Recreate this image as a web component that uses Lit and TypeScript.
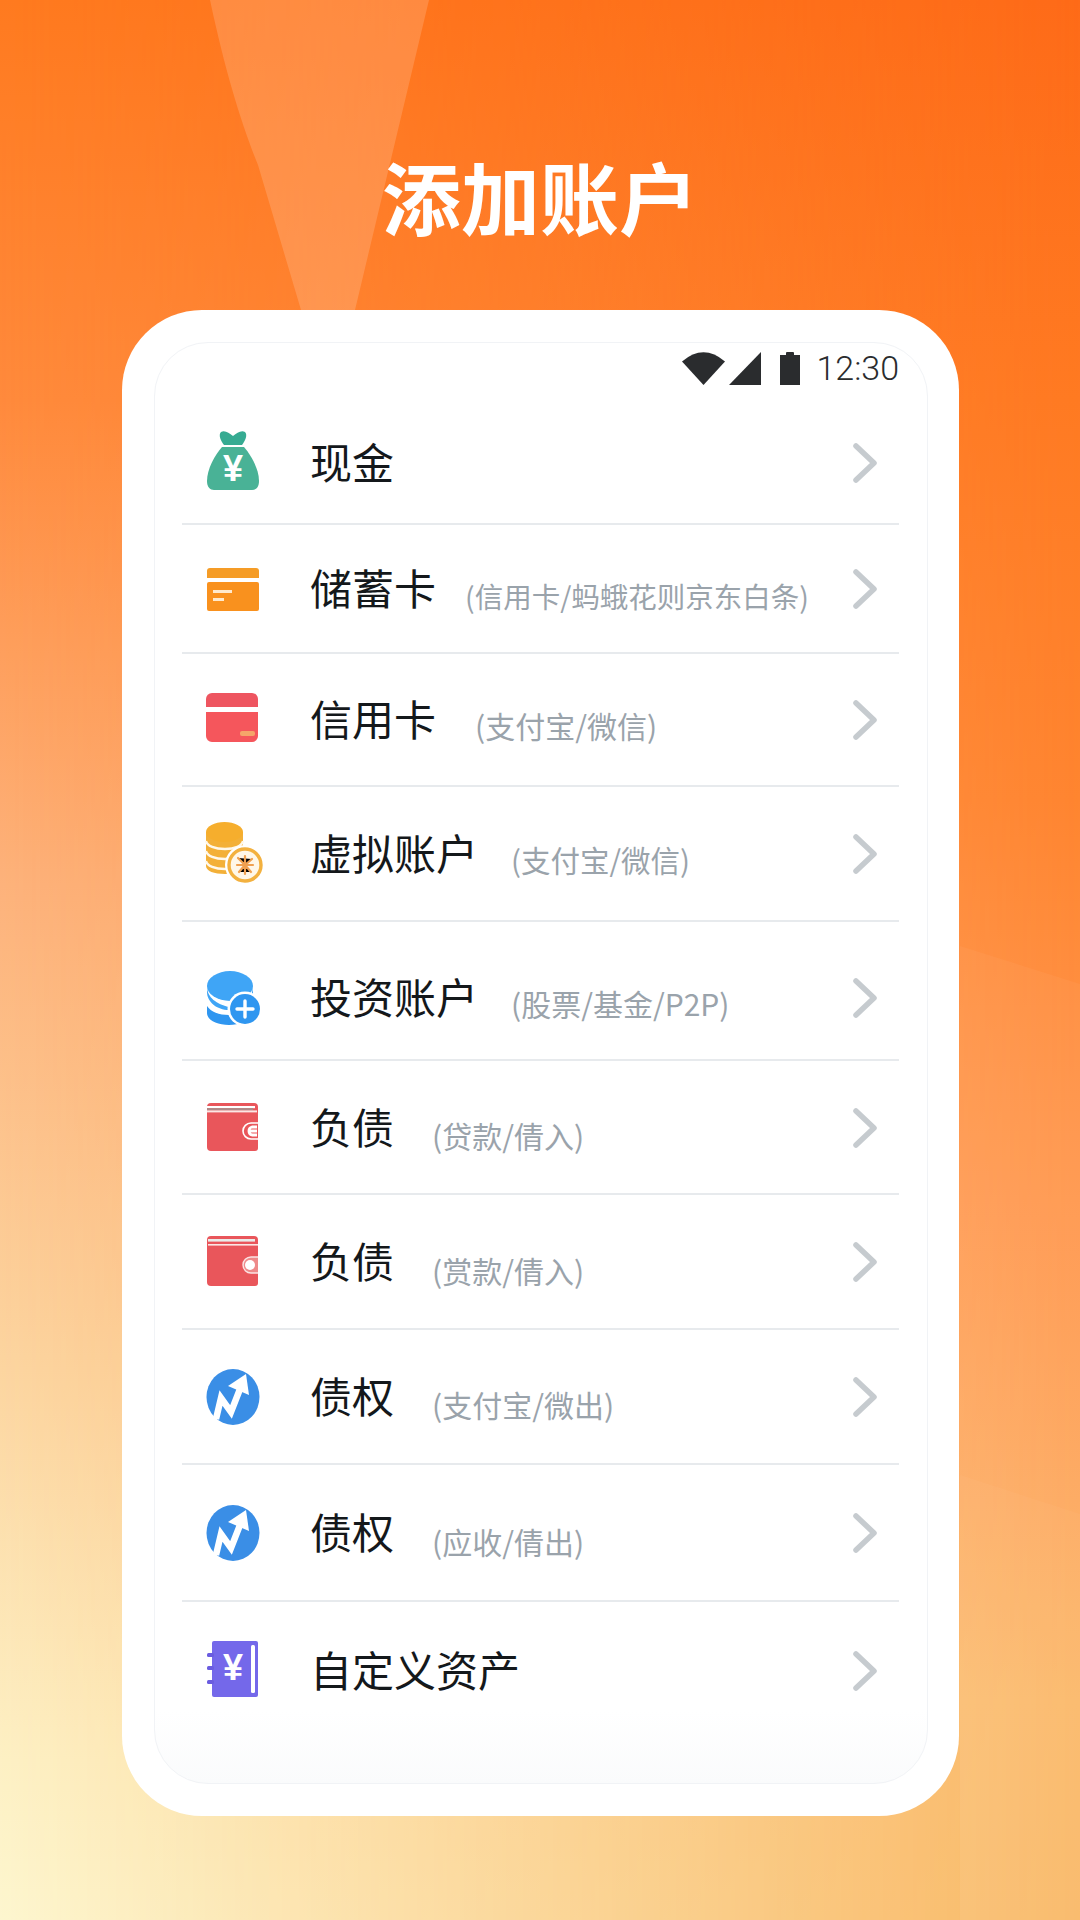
import { LitElement, html, css, svg } from "lit";
import { customElement } from "lit/decorators.js";

const yen = (x: number, y: number, size: number, fill: string) =>
  svg`<text x=${x} y=${y} font-size=${size} font-weight="700" font-family="Liberation Sans, sans-serif" text-anchor="middle" fill=${fill}>¥</text>`;

const icons: Record<string, unknown> = {
  bag: svg`
    <path d="M20 1C24-1 28 2 32 5 36 2 40-1 44 1 47 4 44 10 41 14H23C20 10 17 4 20 1Z" fill="#36AB92"/>
    <path d="M21 16H43C50 24 58 38 58 50 58 56 55 59 51 59H13C9 59 6 56 6 50 6 38 14 24 21 16Z" fill="#49B296"/>
    ${yen(32, 50, 36, "#fff")}`,
  debit: svg`
    <path d="M6 14a3 3 0 0 1 3-3H55a3 3 0 0 1 3 3V21H6Z" fill="#F59C26"/>
    <rect x="6" y="25" width="52" height="29" rx="2" fill="#F9911E"/>
    <rect x="12" y="33" width="19" height="3" fill="#FFE9CC"/>
    <rect x="12" y="41" width="11" height="3" fill="#FFE9CC"/>`,
  credit: svg`
    <path d="M5 11a6 6 0 0 1 6-6H51a6 6 0 0 1 6 6V19H5Z" fill="#EE5560"/>
    <path d="M5 24H57V48a6 6 0 0 1-6 6H11a6 6 0 0 1-6-6Z" fill="#F5565C"/>
    <rect x="39" y="43" width="15" height="5" rx="2" fill="#F5A56A"/>`,
  coins: svg`
    <path d="M5 10H42V44C42 49 34 52 24 52 13 52 5 49 5 44Z" fill="#F3B038"/>
    <g fill="none" stroke="#FFF8EA" stroke-width="2.4">
      <path d="M5 19C6 24 14 27 24 27 34 27 41 24 42 19"/>
      <path d="M5 29C6 34 14 37 24 37 34 37 41 34 42 29"/>
      <path d="M5 39C6 44 14 47 24 47 34 47 41 44 42 39"/>
    </g>
    <ellipse cx="23.5" cy="10" rx="18.5" ry="10" fill="#F6AE2D"/>
    <circle cx="44" cy="43" r="20" fill="#fff"/>
    <circle cx="44" cy="43" r="16" fill="#FFF7E8" stroke="#F3B13F" stroke-width="3.4"/>
    <g stroke="#F0A050" stroke-width="2.2" stroke-linecap="round">
      <path d="M37 36 44 43 51 37M36 43H52M44 34V52M38 50 44 43 50 50"/>
    </g>`,
  db: svg`
    <path d="M6 40V47C6 54 16 59 28 59 40 59 50 54 50 47V40C46 46 38 49 28 49 18 49 10 46 6 40Z" fill="#2F96F0"/>
    <ellipse cx="29" cy="20" rx="23" ry="15" fill="#3FA5F6"/>
    <path d="M6 20C6 32 16 38 28 41 38 43 50 36 52 22V30C50 40 38 44 28 44 16 44 6 36 6 26Z" fill="#3FA5F6"/>
    <circle cx="44" cy="43" r="17.5" fill="#fff"/>
    <circle cx="44" cy="43" r="15" fill="#2F96F0"/>
    <path d="M44 35V51M36 43H52" stroke="#fff" stroke-width="3.4" stroke-linecap="round"/>`,
  walletA: svg`
    <path d="M6 12a4 4 0 0 1 4-4H53a4 4 0 0 1 4 4V53a3 3 0 0 1-3 3H10a4 4 0 0 1-4-4Z" fill="#E9565B"/>
    <rect x="6" y="11" width="48" height="2.2" fill="#fff"/>
    <rect x="6" y="13.2" width="46" height="2.2" fill="#A98A88"/>
    <rect x="6" y="15.4" width="50" height="2" fill="#FBE7E5"/>
    <path d="M57 28H50a8 8 0 0 0 0 16H57" fill="none" stroke="#fff" stroke-width="1.6"/>
    <path d="M48 36H56M56 32H51a4 4 0 0 0-3 4 4 4 0 0 0 3 4H56" fill="none" stroke="#fff" stroke-width="2.8"/>`,
  walletB: svg`
    <path d="M6 10a4 4 0 0 1 4-4H53a4 4 0 0 1 4 4V53a3 3 0 0 1-3 3H10a4 4 0 0 1-4-4Z" fill="#E9565B"/>
    <rect x="7" y="9" width="47" height="2.6" fill="#E9ECEA"/>
    <rect x="7" y="14" width="50" height="1.6" fill="#FBE7E5"/>
    <path d="M57 27H50a8 8 0 0 0 0 16H57" fill="#EE8A8A" stroke="#FBE3E3" stroke-width="1.4"/>
    <circle cx="49" cy="35" r="5" fill="#fff"/>`,
  trend: svg`
    <ellipse cx="32" cy="32" rx="26.5" ry="28" fill="#3A8EE6"/>
    <path d="M15 54 20 33 30 47 39 24" fill="none" stroke="#fff" stroke-width="6.5"/>
    <path d="M45 9 27 21 48 30Z" fill="#fff"/>`,
  book: svg`
    <rect x="11" y="3" width="46" height="56" rx="2" fill="#7468EA"/>
    <rect x="6" y="15" width="7" height="4" rx="1.5" fill="#6A5CE0"/>
    <rect x="6" y="28" width="7" height="4" rx="1.5" fill="#6A5CE0"/>
    <rect x="6" y="42" width="7" height="4" rx="1.5" fill="#6A5CE0"/>
    <rect x="50" y="7" width="4" height="48" rx="1.5" fill="#fff"/>
    ${yen(32, 42, 36, "#fff")}`,
};

interface Row {
  icon: string;
  label: string;
  sub?: string;
  h: number;
  gap?: number;
  subSize?: number;
  subTop?: number;
  shift?: number;
  last?: boolean;
}

const rows: Row[] = [
  { icon: "bag", label: "现金", h: 123 },
  { icon: "debit", label: "储蓄卡", sub: "(信用卡/蚂蛾花则京东白条)", h: 129, gap: 29, subSize: 28.5 },
  { icon: "credit", label: "信用卡", sub: "(支付宝/微信)", h: 133, gap: 39, subTop: 11 },
  { icon: "coins", label: "虚拟账户", sub: "(支付宝/微信)", h: 135, gap: 33, subSize: 29.5, subTop: 11 },
  { icon: "db", label: "投资账户", sub: "(股票/基金/P2P)", h: 139, gap: 33, shift: 14, subTop: 11 },
  { icon: "walletA", label: "负债", sub: "(贷款/倩入)", h: 134, gap: 38, subTop: 16 },
  { icon: "walletB", label: "负债", sub: "(赏款/倩入)", h: 135, gap: 38, subTop: 16 },
  { icon: "trend", label: "债权", sub: "(支付宝/微出)", h: 135, gap: 38, subTop: 15 },
  { icon: "trend", label: "债权", sub: "(应收/倩出)", h: 137, gap: 38, subTop: 16 },
  { icon: "book", label: "自定义资产", h: 136, last: true },
];

@customElement("app-root")
export class AppRoot extends LitElement {
  static styles = css`
    :host {
      display: block;
      width: 1080px;
      height: 1920px;
      font-family: "Noto Sans CJK SC", "Liberation Sans", sans-serif;
    }
    .page {
      position: relative;
      width: 1080px;
      height: 1920px;
      overflow: hidden;
      box-sizing: border-box;
      display: flex;
      flex-direction: column;
      background: linear-gradient(
        to bottom,
        #fe6b18 0,
        #ff7a22 400px,
        #ff8530 800px,
        #ff984f 1200px,
        #fda95f 1500px,
        #fbb868 1700px,
        #f9b865 1920px
      );
    }
    .wash {
      position: absolute;
      inset: 0;
      background: linear-gradient(
        to bottom,
        #ff7a1f 0,
        #ff8a3c 400px,
        #fdb27b 885px,
        #fcd5a0 1370px,
        #fdf0c4 1760px,
        #fdf6cf 1920px
      );
      -webkit-mask-image: linear-gradient(to right, #000 0%, transparent 100%);
      mask-image: linear-gradient(to right, #000 0%, transparent 100%);
    }
    .shapes {
      position: absolute;
      inset: 0;
      width: 1080px;
      height: 1920px;
    }
    .header {
      position: relative;
      height: 310px;
      box-sizing: border-box;
      padding-top: 80px;
      display: flex;
      align-items: center;
      justify-content: center;
    }
    h1 {
      margin: 0;
      font-size: 79px;
      line-height: 1;
      font-weight: 700;
      color: #fff;
    }
    .card {
      position: relative;
      margin: 0 121px 0 122px;
      height: 1506px;
      box-sizing: border-box;
      padding: 32px 31px 32px 32px;
      background: #fff;
      border-radius: 80px;
      display: flex;
    }
    .inner {
      flex: 1;
      box-sizing: border-box;
      border: 1px solid #f1f3f6;
      border-radius: 54px;
      padding: 0 28px 45px 27px;
      background: linear-gradient(to bottom, #fff 95%, #fafbfc 100%);
      display: flex;
      flex-direction: column;
    }
    .status {
      height: 59px;
      box-sizing: border-box;
      padding-top: 9px;
      display: flex;
      align-items: flex-start;
      justify-content: flex-end;
      color: #2a2c2e;
    }
    .status svg {
      display: block;
      fill: #2a2c2e;
    }
    .wifi {
      margin-right: 4px;
    }
    .signal {
      margin-right: 19px;
    }
    .battery {
      margin-right: 16px;
    }
    .time {
      font-family: Roboto, "Liberation Sans", sans-serif;
      font-size: 34px;
      line-height: 33px;
      font-weight: 300;
    }
    .row {
      box-sizing: border-box;
      display: flex;
      align-items: center;
      border-bottom: 2px solid #e7eaed;
    }
    .row.last {
      border-bottom: 0;
    }
    .icon {
      flex: none;
      width: 64px;
      height: 64px;
      margin: 0 45px 0 19px;
      overflow: visible;
    }
    .label {
      flex: none;
      font-size: 42px;
      line-height: 48px;
      font-weight: 400;
      color: #14181b;
      margin-top: -3px;
    }
    .sub {
      flex: none;
      line-height: 40px;
      color: #9aa3ab;
    }
    .chev {
      flex: none;
      margin-left: auto;
      margin-right: 21px;
      margin-top: 1px;
      width: 26px;
      height: 40px;
      fill: none;
      stroke: #c6cbcf;
      stroke-width: 5.5;
      stroke-linecap: round;
      stroke-linejoin: round;
    }
  `;

  render() {
    return html`
      <div class="page">
        <div class="wash"></div>
        <svg class="shapes" viewBox="0 0 1080 1920">
          <path d="M960 946 1080 984V1920H960Z" fill="#fff" opacity="0.04" />
          <path d="M960 1475 1080 1514V1920H960Z" fill="#fff" opacity="0.03" />
          <path
            d="M210 0H429L355 310H301L258 165C240 120 225 70 210 0Z"
            fill="#fff"
            opacity="0.16"
          />
        </svg>
        <div class="header"><h1>添加账户</h1></div>
        <div class="card">
          <div class="inner">
            <div class="status">
              <svg class="wifi" width="43" height="33" viewBox="0 0 42 33" preserveAspectRatio="none">
                <path d="M0 9.5Q21-9 42 9.5L21 33Z" />
              </svg>
              <svg class="signal" width="32" height="33" viewBox="0 0 32 33">
                <path d="M32 0V33H0Z" />
              </svg>
              <svg class="battery" width="20" height="33" viewBox="0 0 20 33">
                <path d="M0 3H6V1Q6 0 7 0H13Q14 0 14 1V3H20V33H0Z" />
              </svg>
              <span class="time">12:30</span>
            </div>
            ${rows.map(
              (r) => html`
                <div
                  class="row ${r.last ? "last" : ""}"
                  style="height:${r.h}px;padding-top:${r.shift ?? 0}px"
                >
                  <svg class="icon" viewBox="0 0 64 64">${icons[r.icon]}</svg>
                  <span class="label">${r.label}</span>
                  ${r.sub
                    ? html`<span
                        class="sub"
                        style="margin-left:${r.gap ?? 40}px;font-size:${r.subSize ?? 30}px;margin-top:${r.subTop ?? 14}px"
                        >${r.sub}</span
                      >`
                    : ""}
                  <svg class="chev" viewBox="0 0 26 40">
                    <path d="M4 3 22 20 4 37" />
                  </svg>
                </div>
              `
            )}
          </div>
        </div>
      </div>
    `;
  }
}
